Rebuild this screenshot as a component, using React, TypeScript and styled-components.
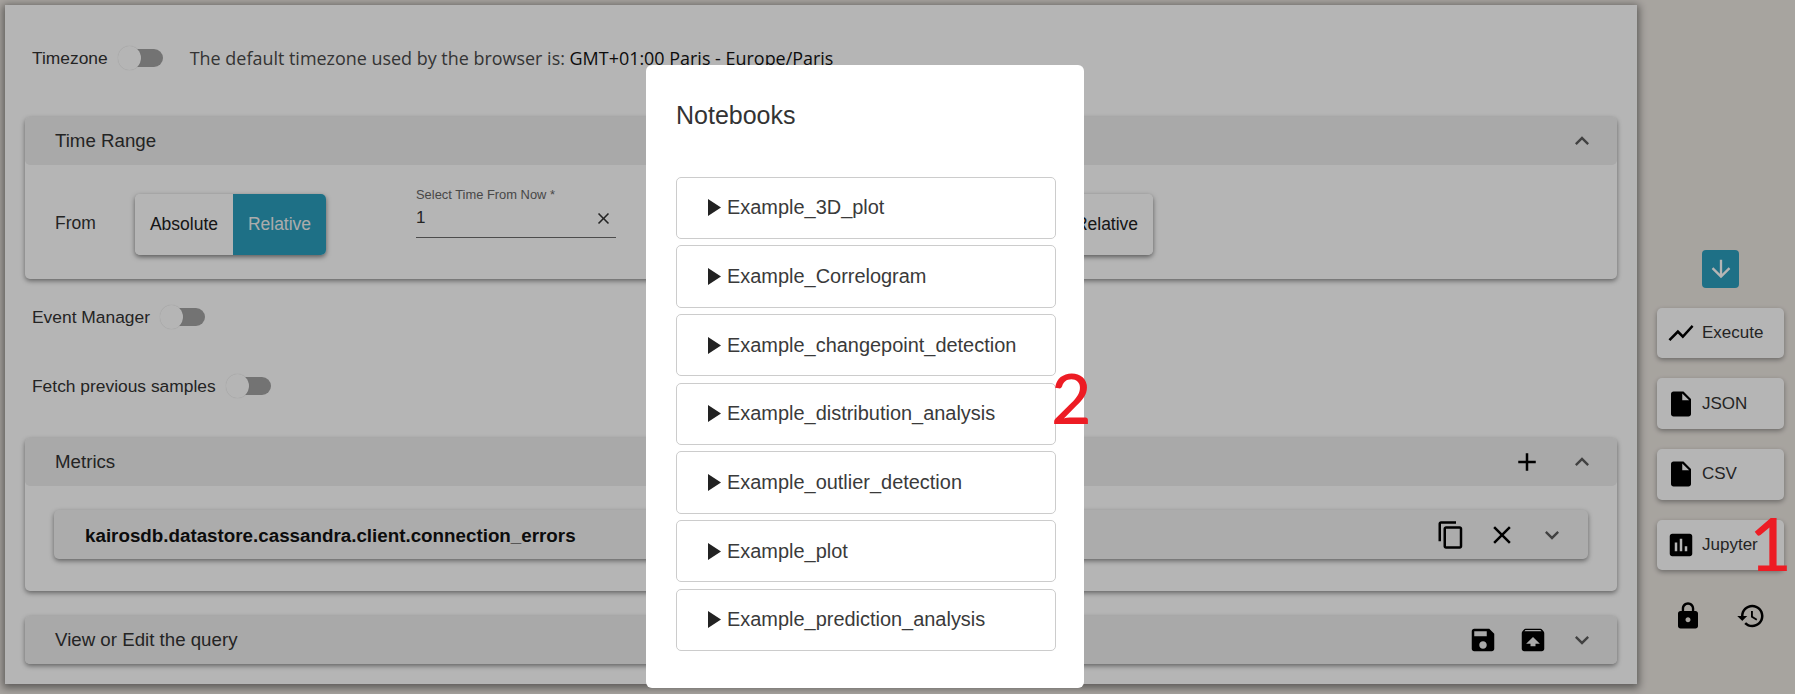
import React from "react";
import styled, { createGlobalStyle } from "styled-components";

const GlobalStyle = createGlobalStyle`
  html, body {
    margin: 0;
    height: 694px;
    overflow: hidden;
    background: #ece7e1;
  }
  * {
    box-sizing: border-box;
  }
`;

const ICONS = {
  less: "M12 8l-6 6 1.41 1.41L12 10.83l4.59 4.58L18 14z",
  more: "M16.59 8.59L12 13.17 7.41 8.59 6 10l6 6 6-6z",
  add: "M19 13h-6v6h-2v-6H5v-2h6V5h2v6h6v2z",
  close:
    "M19 6.41L17.59 5 12 10.59 6.41 5 5 6.41 10.59 12 5 17.59 6.41 19 12 13.41 17.59 19 19 17.59 13.41 12z",
  copy: "M16 1H4c-1.1 0-2 .9-2 2v14h2V3h12V1zm3 4H8c-1.1 0-2 .9-2 2v14c0 1.1.9 2 2 2h11c1.1 0 2-.9 2-2V7c0-1.1-.9-2-2-2zm0 16H8V7h11v14z",
  save: "M17 3H5c-1.11 0-2 .9-2 2v14c0 1.1.89 2 2 2h14c1.1 0 2-.9 2-2V7l-4-4zm-5 16c-1.66 0-3-1.34-3-3s1.34-3 3-3 3 1.34 3 3-1.34 3-3 3zm3-10H5V5h10v4z",
  unarchive:
    "M20.55 5.22l-1.39-1.68C18.88 3.21 18.47 3 18 3H6c-.47 0-.88.21-1.15.55L3.46 5.22C3.17 5.57 3 6.01 3 6.5V19c0 1.1.89 2 2 2h14c1.1 0 2-.9 2-2V6.5c0-.49-.17-.93-.45-1.28zM12 9.5l5.5 5.5H14v2h-4v-2H6.5L12 9.5zM5.12 5l.82-1h12l.93 1H5.12z",
  lock: "M18 8h-1V6c0-2.76-2.24-5-5-5S7 3.24 7 6v2H6c-1.1 0-2 .9-2 2v10c0 1.1.9 2 2 2h12c1.1 0 2-.9 2-2V10c0-1.1-.9-2-2-2zm-6 9c-1.1 0-2-.9-2-2s.9-2 2-2 2 .9 2 2-.9 2-2 2zm3.1-9H8.9V6c0-1.71 1.39-3.1 3.1-3.1 1.71 0 3.1 1.39 3.1 3.1v2z",
  history:
    "M13 3c-4.97 0-9 4.03-9 9H1l3.89 3.89.07.14L9 12H6c0-3.87 3.13-7 7-7s7 3.13 7 7-3.13 7-7 7c-1.93 0-3.68-.79-4.94-2.06l-1.42 1.42C8.27 19.99 10.51 21 13 21c4.97 0 9-4.03 9-9s-4.03-9-9-9zm-1 5v5l4.28 2.54.72-1.21-3.5-2.08V8H12z",
  arrow: "M20 12l-1.41-1.41L13 16.17V4h-2v12.17l-5.58-5.59L4 12l8 8 8-8z",
  chart: "M3.5 18.49l6-6.01 4 4L22 6.92l-1.41-1.41-7.09 7.97-4-4L2 16.99z",
  file: "M6 2c-1.1 0-1.99.9-1.99 2L4 20c0 1.1.89 2 1.99 2H18c1.1 0 2-.9 2-2V8l-6-6H6zm7 7V3.5L18.5 9H13z",
  assessment:
    "M19 3H5c-1.1 0-2 .9-2 2v14c0 1.1.9 2 2 2h14c1.1 0 2-.9 2-2V5c0-1.1-.9-2-2-2zM9 17H7v-7h2v7zm4 0h-2V7h2v10zm4 0h-2v-4h2v4z",
};

const Svg = styled.svg<{ $size: number; $color: string }>`
  width: ${(p) => p.$size}px;
  height: ${(p) => p.$size}px;
  flex: none;
  fill: ${(p) => p.$color};
`;

interface IconProps {
  name: keyof typeof ICONS;
  size?: number;
  color?: string;
}

const Icon: React.FC<IconProps> = ({ name, size = 30, color = "#000000" }) => (
  <Svg viewBox="0 0 24 24" $size={size} $color={color}>
    <path d={ICONS[name]} />
  </Svg>
);

const Page = styled.div`
  display: flex;
  width: 1795px;
  height: 694px;
  padding: 5px 0 0 5px;
  font-family: "Liberation Sans", Arial, sans-serif;
  color: #212121;
`;

const Main = styled.main`
  width: 1632px;
  height: 679px;
  padding: 41px 20px 0;
  background: #ffffff;
  box-shadow: 0 2px 8px 2px rgba(0, 0, 0, 0.45);
`;

const OptionRow = styled.div<{ $top?: number }>`
  display: flex;
  align-items: center;
  height: 24px;
  padding-left: 7px;
  margin-top: ${(p) => p.$top ?? 0}px;
  font-size: 17.4px;
  color: #333333;
`;

const ToggleWrap = styled.span`
  position: relative;
  width: 45px;
  height: 24px;
  margin-left: 10px;
`;

const ToggleTrack = styled.span`
  position: absolute;
  left: 5px;
  right: 0;
  top: 3px;
  bottom: 3px;
  border-radius: 9px;
  background: #a3a3a3;
`;

const ToggleThumb = styled.span`
  position: absolute;
  left: 0;
  top: 0;
  width: 23px;
  height: 24px;
  border-radius: 50%;
  background: #ffffff;
  box-shadow: 0 0 1px rgba(0, 0, 0, 0.2);
`;

const Toggle: React.FC = () => (
  <ToggleWrap>
    <ToggleTrack />
    <ToggleThumb />
  </ToggleWrap>
);

const ZoneText = styled.span`
  margin-left: 27px;
  font-family: "Open Sans", sans-serif;
  font-size: 17.95px;
  color: #4a4a4a;
  white-space: nowrap;

  b {
    font-weight: 400;
    color: #111111;
  }
`;

const Card = styled.section<{ $top: number }>`
  margin-top: ${(p) => p.$top}px;
  border-radius: 5px;
  background: #ffffff;
  box-shadow: 0 2px 5px rgba(0, 0, 0, 0.45);
`;

const CardHeader = styled.header`
  display: flex;
  align-items: center;
  height: 48px;
  padding: 0 21px 0 30px;
  border-radius: 5px;
  background: #eeeeee;
  font-size: 18.7px;
  color: #333333;
`;

const HeaderTitle = styled.span`
  flex: 1;
`;

const IconRow = styled.div<{ $gap: number }>`
  display: flex;
  align-items: center;
  gap: ${(p) => p.$gap}px;
`;

const TimeBody = styled.div`
  display: flex;
  height: 114px;
  padding: 23px 0 0 30px;
`;

const SideLabel = styled.span<{ $width: number }>`
  width: ${(p) => p.$width}px;
  margin-top: 5px;
  font-size: 17.5px;
  line-height: 61px;
  color: #333333;
`;

const ButtonGroup = styled.div`
  display: flex;
  width: 191px;
  height: 61px;
  margin-top: 6px;
  border-radius: 5px;
  overflow: hidden;
  box-shadow: 0 2px 5px rgba(0, 0, 0, 0.5);
`;

const GroupButton = styled.button<{ $active?: boolean; $width: number }>`
  width: ${(p) => p.$width}px;
  padding: 0;
  border: 0;
  background: ${(p) => (p.$active ? "#2b9ebd" : "#ffffff")};
  color: ${(p) => (p.$active ? "#f2f2f2" : "#212121")};
  font-family: inherit;
  font-size: 17.5px;
`;

const TimeField = styled.div`
  width: 200px;
  margin-left: 90px;
  margin-right: 264px;
  height: 50px;
  border-bottom: 1px solid #6b6b6b;
`;

const FieldLabel = styled.div`
  height: 14px;
  font-size: 12.9px;
  line-height: 14px;
  color: #666666;
`;

const FieldValue = styled.div`
  display: flex;
  justify-content: space-between;
  align-items: center;
  height: 30px;
  padding: 2px 3px 0 0;
  font-size: 17px;
  color: #333333;
`;

const MetricBody = styled.div`
  height: 105px;
  padding: 24px 29px 0 29px;
`;

const MetricRow = styled.div`
  display: flex;
  align-items: center;
  height: 49px;
  padding: 0 22px 0 31px;
  border-radius: 5px;
  background: #f3f3f3;
  box-shadow: 0 2px 5px rgba(0, 0, 0, 0.45);
`;

const MetricName = styled.span`
  flex: 1;
  padding-top: 2px;
  font-size: 18.8px;
  font-weight: 700;
  color: #111111;
`;

const Sidebar = styled.aside`
  display: flex;
  flex-direction: column;
  align-items: center;
  width: 127px;
  margin-left: 20px;
  padding-top: 245px;
`;

const ScrollButton = styled.div`
  display: flex;
  align-items: center;
  justify-content: center;
  width: 37px;
  height: 38px;
  margin-bottom: 19.8px;
  border-radius: 4px;
  background: #2b9ebd;
`;

const ActionButton = styled.button`
  display: flex;
  align-items: center;
  gap: 6px;
  width: 127px;
  height: 50.6px;
  flex: none;
  margin-bottom: 20px;
  padding: 0 0 0 9px;
  border: 0;
  border-radius: 5px;
  background: #ffffff;
  box-shadow: 0 2px 5px rgba(0, 0, 0, 0.35);
  color: #333333;
  font-family: inherit;
  font-size: 17px;
`;

const FooterIcons = styled.div`
  display: flex;
  gap: 33px;
  margin: 11px 0 0 -2px;
`;

const Backdrop = styled.div`
  position: fixed;
  inset: 0;
  background: rgba(0, 0, 0, 0.29);
`;

const Modal = styled.div`
  position: absolute;
  left: 646px;
  top: 65px;
  width: 438px;
  height: 623px;
  padding: 30px 28px 0 30px;
  border-radius: 6px;
  background: #ffffff;
`;

const ModalTitle = styled.h2`
  margin: 0 0 41.7px;
  font-size: 25px;
  font-weight: 400;
  line-height: 40px;
  color: #333333;
`;

const NotebookList = styled.div`
  display: flex;
  flex-direction: column;
  gap: 6.33px;
`;

const NotebookItem = styled.div`
  display: flex;
  align-items: center;
  gap: 6px;
  height: 62.33px;
  padding-left: 31px;
  border: 1px solid #cccccc;
  border-radius: 5px;
  font-size: 19.95px;
  color: #3a3a3a;
`;

const Marker = styled.svg`
  width: 13px;
  height: 17px;
  flex: none;
  fill: #222222;
`;

const Annotation = styled.span<{ $left: number; $top: number; $size: number }>`
  position: absolute;
  left: ${(p) => p.$left}px;
  top: ${(p) => p.$top}px;
  font-family: Lato, sans-serif;
  font-size: ${(p) => p.$size}px;
  font-weight: 500;
  line-height: 72px;
  color: #ed1c24;
`;

const NOTEBOOKS = [
  "Example_3D_plot",
  "Example_Correlogram",
  "Example_changepoint_detection",
  "Example_distribution_analysis",
  "Example_outlier_detection",
  "Example_plot",
  "Example_prediction_analysis",
];

const CHEVRON = "#5c5c5c";

export default function App() {
  return (
    <Page>
      <GlobalStyle />
      <Main>
        <OptionRow>
          Timezone
          <Toggle />
          <ZoneText>
            The default timezone used by the browser is:{" "}
            <b>GMT+01:00 Paris - Europe/Paris</b>
          </ZoneText>
        </OptionRow>

        <Card $top={47}>
          <CardHeader>
            <HeaderTitle>Time Range</HeaderTitle>
            <Icon name="less" size={28} color={CHEVRON} />
          </CardHeader>
          <TimeBody>
            <SideLabel $width={80}>From</SideLabel>
            <ButtonGroup>
              <GroupButton $width={98}>Absolute</GroupButton>
              <GroupButton $width={93} $active>
                Relative
              </GroupButton>
            </ButtonGroup>
            <TimeField>
              <FieldLabel>Select Time From Now *</FieldLabel>
              <FieldValue>
                1
                <Icon name="close" size={19} color="#333333" />
              </FieldValue>
            </TimeField>
            <SideLabel $width={82}>To</SideLabel>
            <ButtonGroup>
              <GroupButton $width={98}>Absolute</GroupButton>
              <GroupButton $width={93}>Relative</GroupButton>
            </ButtonGroup>
          </TimeBody>
        </Card>

        <OptionRow $top={26}>
          Event Manager
          <Toggle />
        </OptionRow>
        <OptionRow $top={45}>
          Fetch previous samples
          <Toggle />
        </OptionRow>

        <Card $top={40}>
          <CardHeader>
            <HeaderTitle>Metrics</HeaderTitle>
            <IconRow $gap={26}>
              <Icon name="add" />
              <Icon name="less" size={28} color={CHEVRON} />
            </IconRow>
          </CardHeader>
          <MetricBody>
            <MetricRow>
              <MetricName>kairosdb.datastore.cassandra.client.connection_errors</MetricName>
              <IconRow $gap={21}>
                <Icon name="copy" />
                <Icon name="close" />
                <Icon name="more" size={28} color={CHEVRON} />
              </IconRow>
            </MetricRow>
          </MetricBody>
        </Card>

        <Card $top={25}>
          <CardHeader>
            <HeaderTitle>View or Edit the query</HeaderTitle>
            <IconRow $gap={20}>
              <Icon name="save" />
              <Icon name="unarchive" />
              <Icon name="more" size={28} color={CHEVRON} />
            </IconRow>
          </CardHeader>
        </Card>
      </Main>

      <Sidebar>
        <ScrollButton>
          <Icon name="arrow" size={28} color="#ffffff" />
        </ScrollButton>
        <ActionButton>
          <Icon name="chart" />
          Execute
        </ActionButton>
        <ActionButton>
          <Icon name="file" />
          JSON
        </ActionButton>
        <ActionButton>
          <Icon name="file" />
          CSV
        </ActionButton>
        <ActionButton>
          <Icon name="assessment" />
          Jupyter
        </ActionButton>
        <FooterIcons>
          <Icon name="lock" />
          <Icon name="history" />
        </FooterIcons>
      </Sidebar>

      <Backdrop />

      <Modal>
        <ModalTitle>Notebooks</ModalTitle>
        <NotebookList>
          {NOTEBOOKS.map((name) => (
            <NotebookItem key={name}>
              <Marker viewBox="0 0 13 17">
                <path d="M0 0l13 8.5L0 17z" />
              </Marker>
              {name}
            </NotebookItem>
          ))}
        </NotebookList>
      </Modal>

      <Annotation $left={1749} $top={507} $size={74}>
        1
      </Annotation>
      <Annotation $left={1051} $top={361} $size={70}>
        2
      </Annotation>
    </Page>
  );
}
